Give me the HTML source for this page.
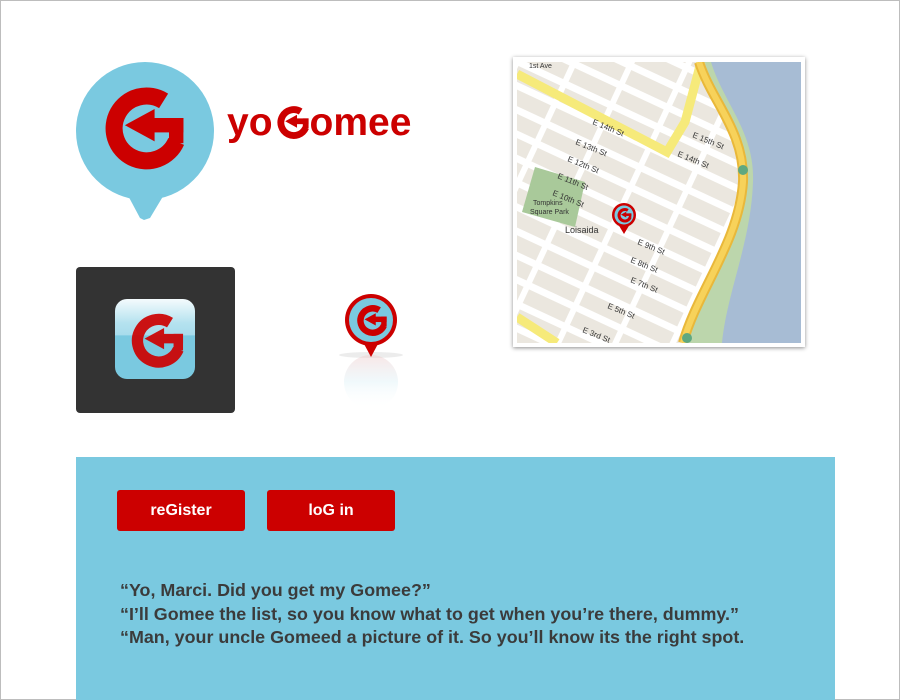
<!DOCTYPE html>
<html><head><meta charset="utf-8"><style>
html,body{margin:0;padding:0}
body{width:900px;height:700px;position:relative;background:#fff;overflow:hidden;font-family:"Liberation Sans",Arial,sans-serif}
.frame{position:absolute;left:0;top:0;width:898px;height:698px;border:1px solid #bdbdbd}
.abs{position:absolute}
.panel{position:absolute;left:76px;top:457px;width:759px;height:243px;background:#7ac9e0}
.btn{position:absolute;top:33px;height:41px;background:#cc0000;color:#fff;font-weight:bold;font-size:16px;line-height:41px;text-align:center;border-radius:3px}
.quotes{position:absolute;left:44px;top:122px;color:#3b3b3b;font-weight:bold;font-size:17.9px;line-height:23.5px;white-space:nowrap}
.logo{position:absolute;left:227px;top:101px;color:#cc0000;font-weight:bold;font-size:39px;letter-spacing:0px;white-space:nowrap}
</style></head><body>
<div class="frame"></div>
<svg width="0" height="0" style="position:absolute">
<defs>
<g id="G">
<path d="M74 21 A36 36 0 1 0 88 66" fill="none" stroke="#cc0000" stroke-width="19"/>
<rect x="60" y="40" width="36" height="16" fill="#cc0000"/>
<rect x="80" y="40" width="16" height="28" fill="#cc0000"/>
<polygon points="31,48 64,30 64,66" fill="#cc0000"/>
</g>
</defs>
</svg>
<!-- big logo bubble -->
<svg class="abs" style="left:74px;top:60px" width="142" height="165" viewBox="0 0 142 165">
<circle cx="71" cy="71" r="69" fill="#7ac9e0"/>
<polygon points="50,128 94,128 76,158 70,160 66,158" fill="#7ac9e0"/>
<g transform="translate(23,22) scale(0.9)"><use href="#G"/></g>
</svg>
<div class="logo">yo<svg width="36" height="36" viewBox="0 0 100 100" style="vertical-align:-5px;margin:0 0 0 1px"><use href="#G"/></svg>omee</div>
<!-- app icon -->
<div class="abs" style="left:76px;top:267px;width:159px;height:146px;background:#333;border-radius:4px"></div>
<div class="abs" style="left:115px;top:299px;width:80px;height:80px;border-radius:12px;background:linear-gradient(#f4fbfd 0%,#b5e2ef 30%,#a8dcec 45%,#7ac9e0 46%,#7ac9e0 100%);overflow:hidden">
<svg width="80" height="80" viewBox="0 0 100 100"><g transform="translate(14,14) scale(0.74)" opacity="0.92"><use href="#G"/></g></svg></div>
<!-- pin -->
<svg class="abs" style="left:335px;top:290px" width="70" height="125" viewBox="0 0 70 125">
<defs><linearGradient id="rf" x1="0" y1="0" x2="0" y2="1"><stop offset="0" stop-color="#f0c8c8" stop-opacity=".45"/><stop offset=".5" stop-color="#d5eef5" stop-opacity=".35"/><stop offset="1" stop-color="#fff" stop-opacity="0"/></linearGradient></defs>
<ellipse cx="36" cy="65" rx="32" ry="3" fill="#e4e4e4" opacity=".7"/>
<circle cx="36" cy="92" r="27" fill="url(#rf)"/>
<polygon points="28,52 44,52 36,67" fill="#cc0000"/>
<circle cx="36" cy="30" r="26" fill="#cc0000"/>
<circle cx="36" cy="30" r="22" fill="#7ac9e0"/>
<g transform="translate(19,13) scale(0.34)"><use href="#G"/></g>
</svg>
<!-- map -->
<div class="abs" style="left:513px;top:57px;width:292px;height:290px;background:#fff;box-shadow:0 1px 4px rgba(0,0,0,.45)"></div>
<svg class="abs" style="left:517px;top:62px" width="284" height="281" viewBox="0 0 284 281">
<defs>
<pattern id="blk" width="52" height="22" patternUnits="userSpaceOnUse" patternTransform="rotate(25)">
<rect width="52" height="22" fill="#fff"/>
<rect x="3" y="3" width="46" height="15" fill="#ebe7df"/>
</pattern>
<clipPath id="c"><rect width="284" height="281"/></clipPath>
</defs>
<g clip-path="url(#c)" font-family="Liberation Sans,sans-serif" font-size="8" fill="#333">
<rect width="284" height="281" fill="url(#blk)"/>
<polygon points="18,105 68,120 58,165 5,150" fill="#a9c99a"/>
<path d="M182 0 C195 40 228 70 226 120 C222 180 180 230 166 281 L284 281 L284 0Z" fill="#bcd6ac"/>
<path d="M194 0 C206 40 238 70 236 120 C234 180 210 230 205 281 L284 281 L284 0Z" fill="#a7bcd4"/>
<path d="M0 12 L150 90 L168 60 L184 0" fill="none" stroke="#f6ea7a" stroke-width="9"/>
<path d="M182 0 C195 40 228 70 226 120 C222 180 180 230 166 281" fill="none" stroke="#e9b83a" stroke-width="10"/>
<path d="M182 0 C195 40 228 70 226 120 C222 180 180 230 166 281" fill="none" stroke="#f7d25a" stroke-width="6"/>
<path d="M0 255 L40 281" stroke="#f6ea7a" stroke-width="9"/>
<text x="75" y="62" transform="rotate(22 75 62)">E 14th St</text>
<text x="58" y="82" transform="rotate(22 58 82)">E 13th St</text>
<text x="50" y="99" transform="rotate(22 50 99)">E 12th St</text>
<text x="40" y="116" transform="rotate(22 40 116)">E 11th St</text>
<text x="35" y="133" transform="rotate(22 35 133)">E 10th St</text>
<text x="16" y="143" font-size="7">Tompkins</text>
<text x="13" y="152" font-size="7">Square Park</text>
<text x="48" y="171" font-size="9">Loisaida</text>
<text x="120" y="182" transform="rotate(22 120 182)">E 9th St</text>
<text x="113" y="200" transform="rotate(22 113 200)">E 8th St</text>
<text x="113" y="220" transform="rotate(22 113 220)">E 7th St</text>
<text x="90" y="246" transform="rotate(22 90 246)">E 5th St</text>
<text x="65" y="270" transform="rotate(22 65 270)">E 3rd St</text>
<text x="160" y="94" transform="rotate(22 160 94)">E 14th St</text>
<text x="175" y="75" transform="rotate(22 175 75)">E 15th St</text>
<text x="12" y="6" font-size="7">1st Ave</text>
<circle cx="226" cy="108" r="5" fill="#5fa880"/>
<circle cx="170" cy="276" r="5" fill="#5fa880"/>
<polygon points="101,162 113,162 107,172" fill="#cc0000"/>
<circle cx="107" cy="153" r="12" fill="#cc0000"/>
<circle cx="107" cy="153" r="9.5" fill="#7ac9e0"/>
<g transform="translate(99,145) scale(0.16)"><use href="#G"/></g>
</g>
</svg>
<div class="panel">
<div class="btn" style="left:41px;width:128px">reGister</div>
<div class="btn" style="left:191px;width:128px">loG in</div>
<div class="quotes">“Yo, Marci. Did you get my Gomee?”<br>“I’ll Gomee the list, so you know what to get when you’re there, dummy.”<br>“Man, your uncle Gomeed a picture of it. So you’ll know its the right spot.</div>
</div>
</body></html>
